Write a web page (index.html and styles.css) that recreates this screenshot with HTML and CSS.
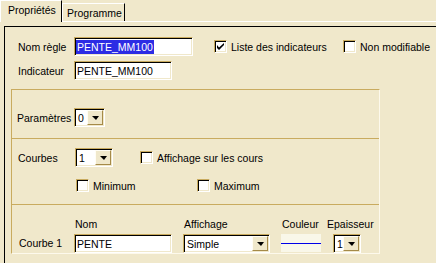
FILE: index.html
```html
<!DOCTYPE html>
<html lang="fr">
<head>
  <meta charset="UTF-8">
  <title>Propriétés</title>
  <link rel="stylesheet" href="styles.css">
</head>
<body>
  <!-- Tabs -->
  <div class="tabs">
    <div class="tab tab-active">Propriétés</div>
    <div class="tab tab-other">Programme</div>
  </div>

  <div class="panel">
    <div class="frame">
      <!-- Rule name / indicator -->
      <div class="head">
        <div class="head-fields">
          <div class="row">
            <span class="lbl">Nom règle</span>
            <span class="field w-name"><span class="selected">PENTE_MM100</span></span>
          </div>
          <div class="row">
            <span class="lbl">Indicateur</span>
            <span class="field w-ind">PENTE_MM100</span>
          </div>
        </div>
        <div class="head-checks">
          <label class="check check-list">
            <span class="cb">
              <svg width="7" height="7" viewBox="0 0 7 7"><path d="M0 2v3l2 2 5-5V-0L2 4.5z" fill="#000"/></svg>
            </span>
            Liste des indicateurs
          </label>
          <label class="check"><span class="cb"></span>Non modifiable</label>
        </div>
      </div>

      <!-- Group -->
      <div class="group">
        <div class="sec sec-param">
          <div class="row">
            <span class="lbl2">Paramètres</span>
            <span class="select w-param"><span class="val">0</span><span class="btn"><span class="arrow"></span></span></span>
          </div>
        </div>

        <div class="sec sec-curves">
          <div class="row">
            <span class="lbl2">Courbes</span>
            <span class="select w-curves"><span class="val">1</span><span class="btn"><span class="arrow"></span></span></span>
            <label class="check check-cours"><span class="cb"></span>Affichage sur les cours</label>
          </div>
          <div class="row row-minmax">
            <label class="check check-min"><span class="cb"></span>Minimum</label>
            <label class="check"><span class="cb"></span>Maximum</label>
          </div>
        </div>

        <div class="sec sec-curve1">
          <div class="col col-label"><span class="curve-lbl">Courbe 1</span></div>
          <div class="col col-nom">
            <span class="heading">Nom</span>
            <span class="field w-nom">PENTE</span>
          </div>
          <div class="col col-aff">
            <span class="heading">Affichage</span>
            <span class="select w-aff"><span class="val">Simple</span><span class="btn"><span class="arrow"></span></span></span>
          </div>
          <div class="col col-color">
            <span class="heading">Couleur</span>
            <span class="swatch"><span class="swatch-line"></span></span>
          </div>
          <div class="col col-ep">
            <span class="heading">Epaisseur</span>
            <span class="select w-ep"><span class="val">1</span><span class="btn"><span class="arrow"></span></span></span>
          </div>
        </div>
      </div>
    </div>
  </div>
</body>
</html>
```

FILE: styles.css
```css
/* --- Vars and reset --- */
:root {
  --face: #f0e8cb;
  --tan: #c9ab5f;
  --light: #fdf9ec;
  --dark-btn: #a58a48;
  --sel: #2c2ce4;
}
* { box-sizing: border-box; }
body {
  margin: 0;
  height: 263px;
  overflow: hidden;
  background: var(--face);
  color: #000;
  font: 10.5px "Liberation Sans", Arial, sans-serif;
}

/* --- Tabs --- */
.tabs { display: flex; align-items: flex-end; height: 21px; position: relative; z-index: 1; }
.tab {
  display: flex;
  align-items: center;
  height: 18px;
  border: 1px solid;
  border-color: #fff #000 transparent #fff;
  border-bottom: none;
}
.tab-active { width: 62px; height: 22px; margin-bottom: -1px; padding: 0 0 3px 7px; background: var(--face); }
.tab-other { width: 63px; padding-left: 4px; }

/* --- Panel --- */
.panel { border-top: 1px solid #fff; }
.frame {
  margin: 4px 0 0 4px;
  height: 240px;
  border-top: 1px solid #000;
  border-left: 1px solid #000;
}

/* --- Head --- */
.head { display: flex; padding: 10px 0 0 13px; }
.head-fields { display: flex; flex-direction: column; gap: 5px; }
.row { display: flex; align-items: center; }
.lbl { width: 56px; }
.head-checks { display: flex; align-items: center; height: 19px; margin-left: 21px; }
.check-list { width: 129px; }

/* --- Controls --- */
.field, .select {
  display: flex;
  align-items: center;
  height: 19px;
  border: 1px solid;
  border-color: var(--tan) #fff #fff var(--tan);
  box-shadow: inset 1px 1px 0 #000, inset -1px -1px 0 var(--face);
  background: #fff;
  white-space: nowrap;
}
.field { padding-left: 2px; }
.field .selected { margin-left: -1px; padding: 0 1px; line-height: 14px; background: var(--sel); color: #fff; }
.w-name { width: 119px; }
.w-ind { width: 98px; }
.w-nom { width: 98px; }

.select { padding: 1px; }
.select .val { flex: 1; padding-left: 2px; }
.btn {
  display: flex;
  align-items: center;
  justify-content: center;
  width: 16px;
  height: 15px;
  background: var(--face);
  border: 1px solid;
  border-color: #fffdf4 var(--dark-btn) var(--dark-btn) #fffdf4;
}
.arrow { width: 0; height: 0; border-top: 4px solid #000; border-left: 4px solid transparent; border-right: 3px solid transparent; }
.w-param { width: 31px; }
.w-curves { width: 38px; }
.w-aff { width: 87px; }
.w-ep { width: 28px; margin-left: 7px; }

.check { display: flex; align-items: center; gap: 4px; }
.cb {
  display: flex;
  align-items: center;
  justify-content: center;
  width: 13px;
  height: 13px;
  border: 1px solid;
  border-color: var(--tan) #fff #fff var(--tan);
  box-shadow: inset 1px 1px 0 #000, inset -1px -1px 0 var(--face);
  background: #fff;
}

/* --- Group box --- */
.group {
  width: 369px;
  margin: 9px 0 0 6px;
  border: 1px solid;
  border-color: var(--tan) var(--light) var(--light) var(--tan);
}
.sec + .sec { border-top: 1px solid var(--tan); }
.lbl2 { width: 57px; }

.sec-param { height: 48px; padding: 18px 0 0 5px; }
.sec-curves { height: 66px; padding: 9px 0 0 6px; }
.check-cours { margin-left: 27px; }
.row-minmax { margin: 12px 0 0 58px; }
.check-min { width: 121px; }

.sec-curve1 { display: flex; align-items: flex-end; height: 49px; padding: 6px 0 0 0; }
.col { display: flex; flex-direction: column; }
.heading { height: 13px; line-height: 13px; margin-bottom: 3px; padding-left: 1px; }
.col-label { width: 62px; padding-left: 7px; }
.curve-lbl { height: 19px; line-height: 19px; }
.col-aff { margin-left: 11px; }
.col-color { margin-left: 11px; }
.col-ep { margin-left: 5px; }
.swatch { display: flex; align-items: center; width: 40px; height: 18px; margin-bottom: 1px; background: #f9f7e9; }
.swatch-line { width: 100%; height: 1px; margin-top: 1px; background: #0000e8; }
```
